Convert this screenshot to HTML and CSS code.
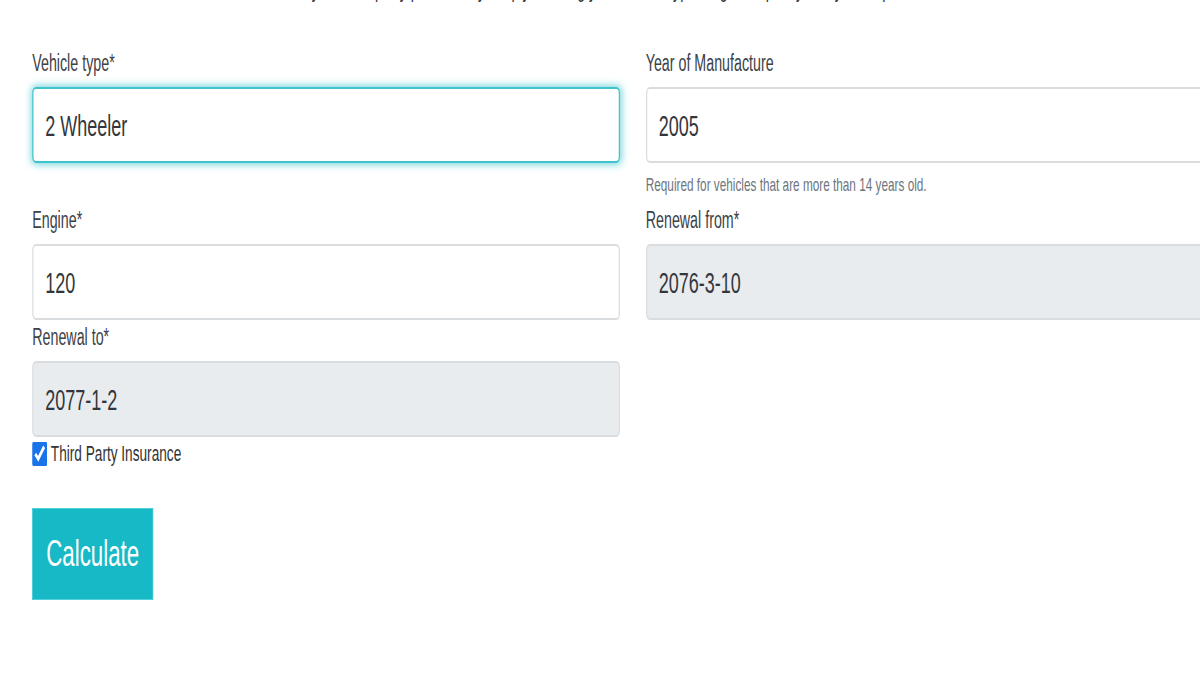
FILE: index.html
```html
<!DOCTYPE html>
<html lang="en">
<head>
  <meta charset="UTF-8">
  <title>Third Party Insurance Calculator</title>
  <link rel="stylesheet" href="styles.css">
</head>
<body>
  <div class="page">
    <p class="intro">Find your third party premium by simply entering your vehicle type, engine capacity and year of purchase below.</p>

    <form class="calc-form" onsubmit="return false;">
      <div class="form-grid">
        <div class="form-group">
          <label for="vehicleType">Vehicle type*</label>
          <input id="vehicleType" class="form-control focused" type="text" value="2 Wheeler">
        </div>

        <div class="form-group">
          <label for="year">Year of Manufacture</label>
          <input id="year" class="form-control" type="text" value="2005">
          <small class="help">Required for vehicles that are more than 14 years old.</small>
        </div>

        <div class="form-group">
          <label for="engine">Engine*</label>
          <input id="engine" class="form-control" type="text" value="120">
        </div>

        <div class="form-group">
          <label for="renewFrom">Renewal from*</label>
          <input id="renewFrom" class="form-control" type="text" value="2076-3-10" readonly>
        </div>

        <div class="form-group">
          <label for="renewTo">Renewal to*</label>
          <input id="renewTo" class="form-control" type="text" value="2077-1-2" readonly>
          <div class="check">
            <input id="thirdParty" type="checkbox" checked>
            <label for="thirdParty">Third Party Insurance</label>
          </div>
        </div>
      </div>

      <button type="submit" class="btn-calc">Calculate</button>
    </form>
  </div>
</body>
</html>
```

FILE: styles.css
```css
html, body {
  margin: 0;
  overflow: hidden;
  background: #fff;
}
body {
  font-family: "Liberation Sans Narrow", "Liberation Sans", Arial, sans-serif;
  color: #3a3f44;
}
.page {
  box-sizing: border-box;
  width: 2041px;
  padding: 0 52px;
  transform: scaleX(0.62);
  transform-origin: 0 0;
}
.intro {
  margin: -25px 0 0;
  font-size: 23px;
  line-height: 28px;
  text-align: center;
  color: #333;
}
.form-grid {
  display: grid;
  grid-template-columns: 1fr 1fr;
  column-gap: 42px;
  margin-top: 46px;
}
.form-group {
  display: flex;
  flex-direction: column;
  margin-bottom: 3px;
}
.form-group > label {
  font-size: 23px;
  line-height: 28px;
  margin-bottom: 10px;
  color: #3d4247;
}
.form-control {
  box-sizing: border-box;
  height: 76px;
  padding: 2px 19px 0;
  font-family: inherit;
  font-size: 29px;
  color: #33373b;
  background: #fff;
  border: 2px solid #dadde0;
  border-radius: 6px;
  outline: none;
}
.form-control[readonly] {
  background: #e9ecef;
}
.form-control.focused {
  border-color: #3ec3cd;
  box-shadow: 0 0 10px 2px rgba(23, 185, 198, 0.55);
}
.help {
  margin: 10px 0 6px;
  font-size: 19px;
  line-height: 24px;
  color: #6c757d;
}
.check {
  display: flex;
  align-items: center;
  margin-top: 3px;
}
.check input {
  width: 24px;
  height: 24px;
  margin: 0 6px 0 0;
  accent-color: #1a73e8;
}
.check label {
  font-size: 22px;
  line-height: 28px;
  color: #333;
}
.btn-calc {
  margin-top: 37px;
  width: 195px;
  height: 92px;
  padding: 0;
  font-family: inherit;
  font-size: 36px;
  color: #fff;
  background: #17b9c6;
  border: 1px solid #4fd0da;
  border-radius: 0;
  cursor: pointer;
}
```
